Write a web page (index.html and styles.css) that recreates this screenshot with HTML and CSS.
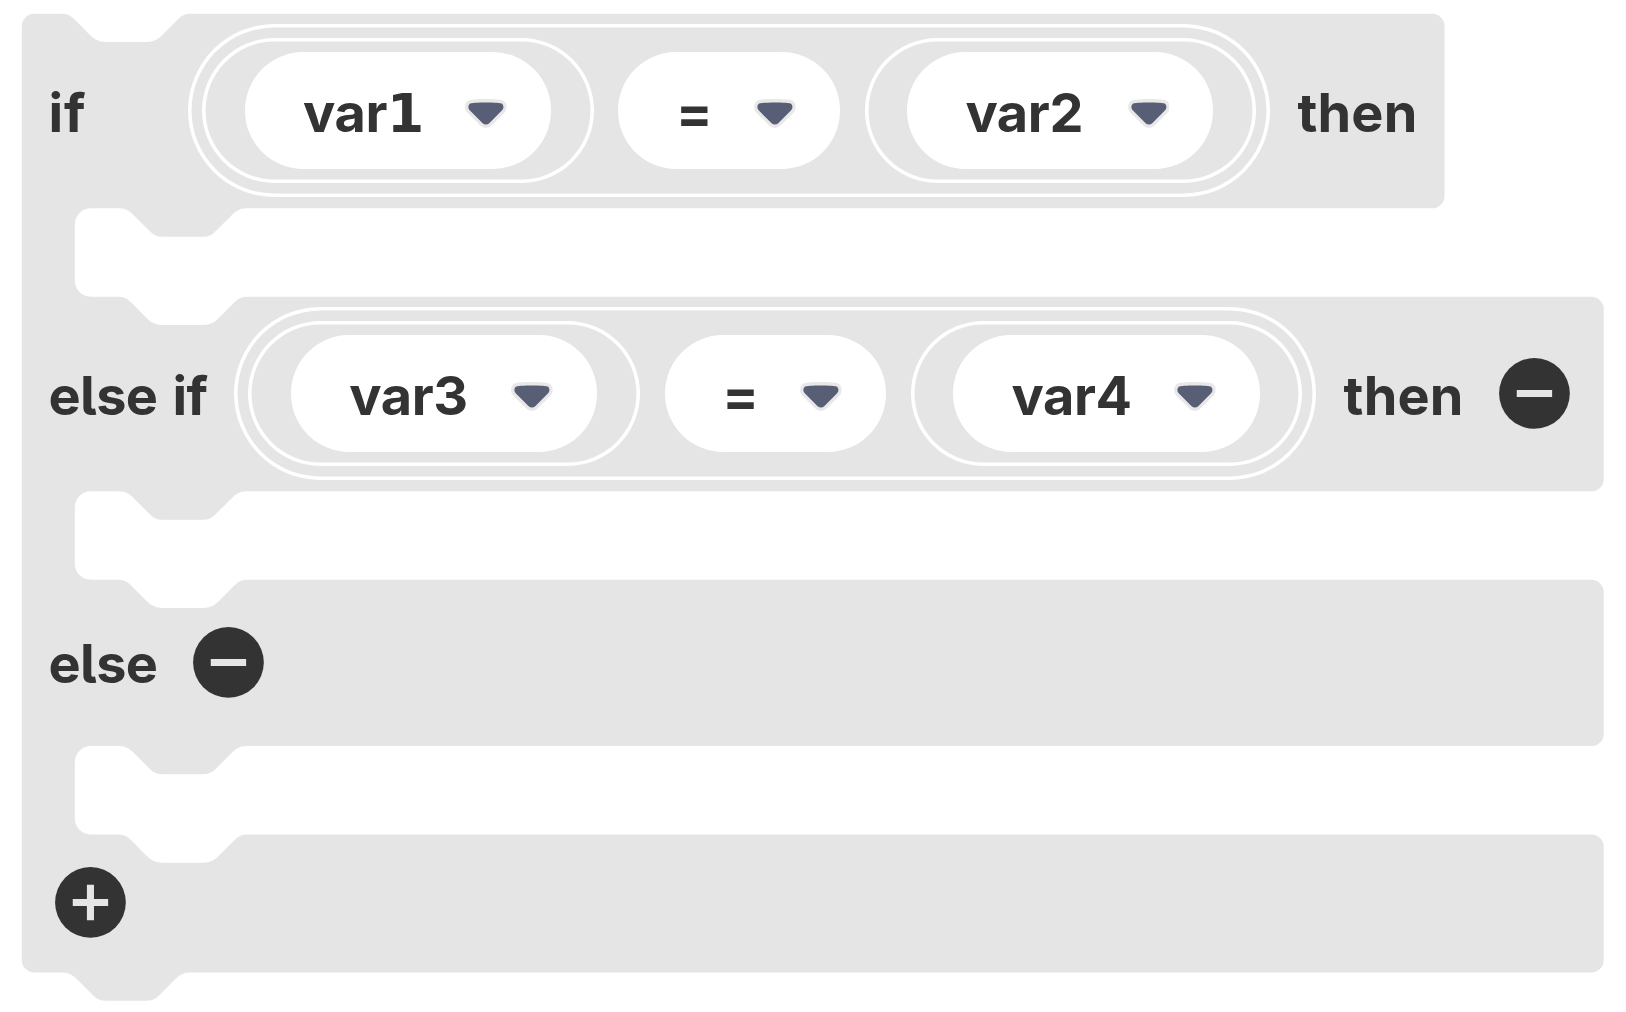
FILE: index.html
```html
<!DOCTYPE html>
<html lang="en">
<head>
<meta charset="utf-8">
<title>If / else if / else block</title>
<link rel="stylesheet" href="styles.css">
</head>
<body>
<svg class="defs" width="0" height="0" aria-hidden="true">
  <symbol id="arrow" viewBox="0 0 12.71 8.79">
    <path fill="#231f20" fill-opacity=".1" d="M12.71,2.44A2.41,2.41,0,0,1,12,4.16L8.08,8.08a2.45,2.45,0,0,1-3.45,0L0.72,4.16A2.42,2.42,0,0,1,0,2.44,2.48,2.48,0,0,1,.71.71C1,0.47,1.43,0,6.36,0S11.75,0.46,12,.71A2.44,2.44,0,0,1,12.71,2.44Z"/>
    <path fill="#575e75" d="M6.36,7.79a1.43,1.43,0,0,1-1-.42L1.42,3.45a1.44,1.44,0,0,1,0-2c0.56-.56,9.31-0.56,9.87,0a1.44,1.44,0,0,1,0,2L7.37,7.37A1.43,1.43,0,0,1,6.36,7.79Z"/>
  </symbol>
  <symbol id="minus" viewBox="0 0 24 24">
    <circle cx="12" cy="12" r="10" fill="#333"/>
    <path fill="#e5e5e5" d="M7 11h10v2H7z"/>
  </symbol>
  <symbol id="plus" viewBox="0 0 24 24">
    <circle cx="12" cy="12" r="10" fill="#333"/>
    <path fill="#e5e5e5" d="M7 11h4V7h2v4h4v2h-4v4h-2v-4H7z"/>
  </symbol>
</svg>
<main class="block">
  <svg class="shape" viewBox="0 0 448 280" aria-hidden="true">
    <path d="M0 4a4 4 0 0 1 4-4h8c2 0 3 1 4 2l4 4c1 1 2 2 4 2h12c2 0 3-1 4-2l4-4c1-1 2-2 4-2H399.2a4 4 0 0 1 4 4v48a4 4 0 0 1-4 4H64
      c-2 0-3 1-4 2l-4 4c-1 1-2 2-4 2h-12c-2 0-3-1-4-2l-4-4c-1-1-2-2-4-2h-8a4 4 0 0 0-4 4v16a4 4 0 0 0 4 4h8c2 0 3 1 4 2l4 4c1 1 2 2 4 2h12c2 0 3-1 4-2l4-4c1-1 2-2 4-2
      H444.2a4 4 0 0 1 4 4v48a4 4 0 0 1-4 4H64
      c-2 0-3 1-4 2l-4 4c-1 1-2 2-4 2h-12c-2 0-3-1-4-2l-4-4c-1-1-2-2-4-2h-8a4 4 0 0 0-4 4v16a4 4 0 0 0 4 4h8c2 0 3 1 4 2l4 4c1 1 2 2 4 2h12c2 0 3-1 4-2l4-4c1-1 2-2 4-2
      H444.2a4 4 0 0 1 4 4v40a4 4 0 0 1-4 4H64
      c-2 0-3 1-4 2l-4 4c-1 1-2 2-4 2h-12c-2 0-3-1-4-2l-4-4c-1-1-2-2-4-2h-8a4 4 0 0 0-4 4v16a4 4 0 0 0 4 4h8c2 0 3 1 4 2l4 4c1 1 2 2 4 2h12c2 0 3-1 4-2l4-4c1-1 2-2 4-2
      H444.2a4 4 0 0 1 4 4v32a4 4 0 0 1-4 4H48
      c-2 0-3 1-4 2l-4 4c-1 1-2 2-4 2h-12c-2 0-3-1-4-2l-4-4c-1-1-2-2-4-2h-8a4 4 0 0 1-4-4z"/>
  </svg>

  <div class="row">
    <span class="word w-if">if</span>
    <div class="condition">
      <div class="reporter"><div class="field"><span class="label">var<span class="one">1</span></span><svg class="arrow"><use href="#arrow"/></svg></div></div>
      <div class="field operator"><span class="label">=</span><svg class="arrow"><use href="#arrow"/></svg></div>
      <div class="reporter"><div class="field"><span class="label">var2</span><svg class="arrow"><use href="#arrow"/></svg></div></div>
    </div>
    <span class="word w-then">then</span>
  </div>
  <div class="slot"></div>

  <div class="row">
    <span class="word w-elseif">else if</span>
    <div class="condition">
      <div class="reporter"><div class="field"><span class="label">var3</span><svg class="arrow"><use href="#arrow"/></svg></div></div>
      <div class="field operator"><span class="label">=</span><svg class="arrow"><use href="#arrow"/></svg></div>
      <div class="reporter"><div class="field"><span class="label">var4</span><svg class="arrow"><use href="#arrow"/></svg></div></div>
    </div>
    <span class="word w-then">then</span>
    <svg class="button"><use href="#minus"/></svg>
  </div>
  <div class="slot"></div>

  <div class="row row-else">
    <span class="word w-else">else</span>
    <svg class="button"><use href="#minus"/></svg>
  </div>
  <div class="slot"></div>

  <div class="row row-end">
    <svg class="button first"><use href="#plus"/></svg>
  </div>
</main>
</body>
</html>
```
FILE: styles.css
```css
:root {
  --u: 3.5375px; /* one block-grid unit */
}

* {
  box-sizing: border-box;
}

body {
  margin: 0;
  height: 1012px;
  overflow: hidden;
  padding: 11.5px 0 0 20.2px;
  background: #fff;
  color: #333;
  font: 700 54px/1.2 Inter, "Noto Sans", sans-serif;
  font-feature-settings: "cv05" 1;
}

.defs {
  position: absolute;
}

.block {
  position: relative;
  width: calc(448 * var(--u));
}

.shape {
  position: absolute;
  left: 0;
  top: 0;
  width: calc(448 * var(--u));
  height: calc(280 * var(--u));
  overflow: visible;
  fill: #e5e5e5;
  stroke: #fff;
  stroke-width: 1;
}

.row {
  position: relative;
  display: flex;
  align-items: center;
  height: calc(56 * var(--u));
  padding-left: calc(8 * var(--u));
}

.row-else {
  height: calc(48 * var(--u));
}

.row-end {
  height: calc(40 * var(--u));
}

.slot {
  height: calc(24 * var(--u));
}

.word,
.label {
  flex: none;
  padding-top: 5px;
  white-space: nowrap;
}

.label {
  letter-spacing: -0.4px;
}

.one {
  display: inline-block;
  font-family: "DejaVu Sans Condensed", "DejaVu Sans", sans-serif;
  font-stretch: condensed;
  line-height: 1;
  transform: scaleX(1.1);
  transform-origin: 0 50%;
}

.w-if { width: 113.3px; margin-right: 26.5px; letter-spacing: 0.8px; }
.w-elseif { width: 159.5px; margin-right: 26.5px; letter-spacing: -0.6px; word-spacing: 3px; }
.w-else { width: 109px; letter-spacing: -0.6px; }
.w-then { width: 120.5px; margin-left: 27.5px; letter-spacing: 0.2px; }

.condition,
.reporter {
  flex: none;
  display: flex;
  align-items: center;
  justify-content: center;
  box-shadow: inset 0 0 0 var(--u) #fff;
}

.condition {
  width: 1081.6px;
  height: calc(49 * var(--u));
  gap: 24.9px;
  border-radius: calc(24.5 * var(--u));
}

.reporter {
  width: 391.3px;
  height: calc(41 * var(--u));
  border-radius: calc(20.5 * var(--u));
}

.field {
  flex: none;
  display: flex;
  align-items: center;
  justify-content: space-between;
  width: 306.3px;
  height: calc(33 * var(--u));
  padding: 0 44px 0 58.3px;
  border-radius: calc(16.5 * var(--u));
  background: #fff;
}

.operator {
  width: 221.3px;
  padding-left: 57.5px;
}

.arrow {
  flex: none;
  width: 41.8px;
  height: 28.9px;
  margin-top: 6px;
}

.button {
  flex: none;
  width: calc(24 * var(--u));
  height: calc(24 * var(--u));
  margin-left: calc(8 * var(--u));
}

.button.first {
  margin-left: -0.2px;
}
```
